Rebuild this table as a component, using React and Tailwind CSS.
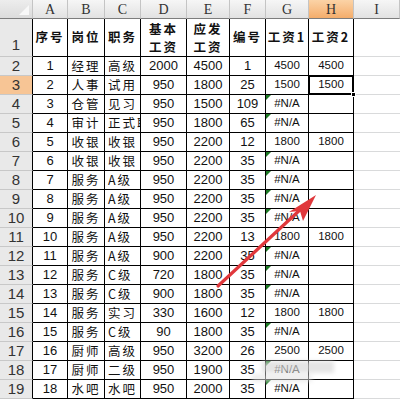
const COLS = ['A', 'B', 'C', 'D', 'E', 'F', 'G', 'H', 'I']

const ROWS = [
  ['1', '经理', '高级', '2000', '4500', '1', '4500', '4500'],
  ['2', '人事', '试用', '950', '1800', '25', '1500', '1500'],
  ['3', '仓管', '见习', '950', '1500', '109', '#N/A', ''],
  ['4', '审计', '正式职', '950', '1800', '65', '#N/A', ''],
  ['5', '收银', '收银', '950', '2200', '12', '1800', '1800'],
  ['6', '收银', '收银', '950', '2200', '35', '#N/A', ''],
  ['7', '服务', 'A级', '950', '2200', '35', '#N/A', ''],
  ['8', '服务', 'A级', '950', '2200', '35', '#N/A', ''],
  ['9', '服务', 'A级', '950', '2200', '35', '#N/A', ''],
  ['10', '服务', 'A级', '950', '2200', '13', '1800', '1800'],
  ['11', '服务', 'A级', '900', '2200', '35', '#N/A', ''],
  ['12', '服务', 'C级', '720', '1800', '35', '#N/A', ''],
  ['13', '服务', 'C级', '900', '1800', '35', '#N/A', ''],
  ['14', '服务', '实习', '330', '1600', '12', '1800', '1800'],
  ['15', '服务', 'C级', '90', '1800', '35', '#N/A', ''],
  ['16', '厨师', '高级', '950', '3200', '26', '2500', '2500'],
  ['17', '厨师', '二级', '950', '1900', '35', '#N/A', ''],
  ['18', '水吧', '水吧', '950', '2000', '35', '#N/A', ''],
]

const CJK = "font-['Noto_Sans_CJK_SC',sans-serif]"
const SANS = "font-['Liberation_Sans',Arial,sans-serif]"
const SERIF = "font-['Liberation_Serif',serif]"

const cellBase = 'relative border-r border-b border-black flex items-center overflow-hidden whitespace-nowrap text-[#111]'

function ErrorMark() {
  return (
    <span className="absolute left-0 top-0 w-0 h-0 border-t-[5px] border-r-[5px] border-t-[#1c7a24] border-r-transparent" />
  )
}

function ColHeader({ label, active }) {
  return (
    <div
      className={`flex items-center justify-center border-r border-b border-r-[#c4c4c4] border-b-[#7d7d7d] text-[14px] text-[#333] ${SERIF} ${
        active ? 'bg-gradient-to-b from-[#fbd3a6] to-[#f4ad6b]' : 'bg-gradient-to-b from-[#f6f6f6] to-[#e2e2e2]'
      }`}
    >
      {label}
    </div>
  )
}

function RowHeader({ n, tall, active }) {
  return (
    <div
      className={`flex justify-center border-b border-r border-b-[#c8c8c8] border-r-black text-[15px] text-[#333] ${SANS} ${
        tall ? 'items-end' : 'items-center'
      } ${active ? 'bg-[#f7c595]' : 'bg-[#e9e9e9]'}`}
    >
      {n}
    </div>
  )
}

function TitleRow() {
  const bold = `${cellBase} justify-center font-bold text-[12.5px] tracking-[2px] ${CJK}`
  return (
    <>
      <RowHeader n="1" tall />
      <div className={bold}>序号</div>
      <div className={bold}>岗位</div>
      <div className={bold}>职务</div>
      <div className={`${bold} flex-col leading-[18px]`}>
        <span>基本</span>
        <span>工资</span>
      </div>
      <div className={`${bold} flex-col leading-[18px]`}>
        <span>应发</span>
        <span>工资</span>
      </div>
      <div className={bold}>编号</div>
      <div className={`${bold} tracking-[1px]`}>工资1</div>
      <div className={`${bold} tracking-[1px]`}>工资2</div>
      <div className="border-b border-[#d9dadb]" />
    </>
  )
}

function DataRow({ r, n }) {
  const [seq, post, level, base, pay, code, w1, w2] = r
  const num = `${cellBase} justify-center text-[13px] ${SANS}`
  const small = `${cellBase} justify-center text-[11.5px] ${SANS}`
  const selected = n === 3
  return (
    <>
      <RowHeader n={n} active={selected} />
      <div className={num}>{seq}</div>
      <div className={`${cellBase} justify-center text-[12.5px] tracking-[2px] ${CJK}`}>{post}</div>
      <div className={`${cellBase} justify-start pl-[3px] text-[12.5px] tracking-[2px] ${CJK}`}>{level}</div>
      <div className={num}>{base}</div>
      <div className={num}>{pay}</div>
      <div className={num}>{code}</div>
      <div className={small}>
        {w1 === '#N/A' && <ErrorMark />}
        {w1}
      </div>
      <div className={`${small} ${selected ? 'overflow-visible' : ''}`}>
        {w2}
        {selected && (
          <>
            <span className="absolute -left-px -top-px right-[-1px] bottom-[-1px] border-2 border-black" />
            <span className="absolute right-[-3px] bottom-[-3px] w-[5px] h-[5px] bg-black border border-white z-10" />
          </>
        )}
      </div>
      <div className="border-b border-[#d9dadb]" />
    </>
  )
}

export default function App() {
  return (
    <div className="relative w-[400px] h-[400px] overflow-hidden bg-white">
      <div className="grid grid-cols-[33px_35px_37px_36px_46px_43px_36px_43px_45px_46px] grid-rows-[19px_38px_repeat(18,19px)]">
        <div className="relative border-r border-b border-r-[#c4c4c4] border-b-[#7d7d7d] bg-gradient-to-b from-[#ededed] to-[#dcdcdc]">
          <span className="absolute right-[3px] bottom-[3px] w-0 h-0 border-l-[10px] border-l-transparent border-b-[10px] border-b-[#f8f8f8]" />
        </div>
        {COLS.map((c) => (
          <ColHeader key={c} label={c} active={c === 'H'} />
        ))}
        <TitleRow />
        {ROWS.map((r, i) => (
          <DataRow key={i} r={r} n={i + 2} />
        ))}
      </div>

      <svg className="absolute left-0 top-0 pointer-events-none" width="400" height="400" viewBox="0 0 400 400">
        <line x1="218" y1="286" x2="302" y2="208" stroke="#e0383c" strokeWidth="3.2" strokeLinecap="round" />
        <polygon points="316,195 303,221 300,211 289,212" fill="#e0383c" />
      </svg>

      <div className="absolute left-[262px] top-[361px] w-[72px] h-[12px] bg-[#d8d8d8]/70 blur-[2px] pointer-events-none" />
      <div className="absolute left-[252px] top-[374px] w-[60px] h-[8px] bg-[#e2e2e2]/60 blur-[2px] pointer-events-none" />
    </div>
  )
}
